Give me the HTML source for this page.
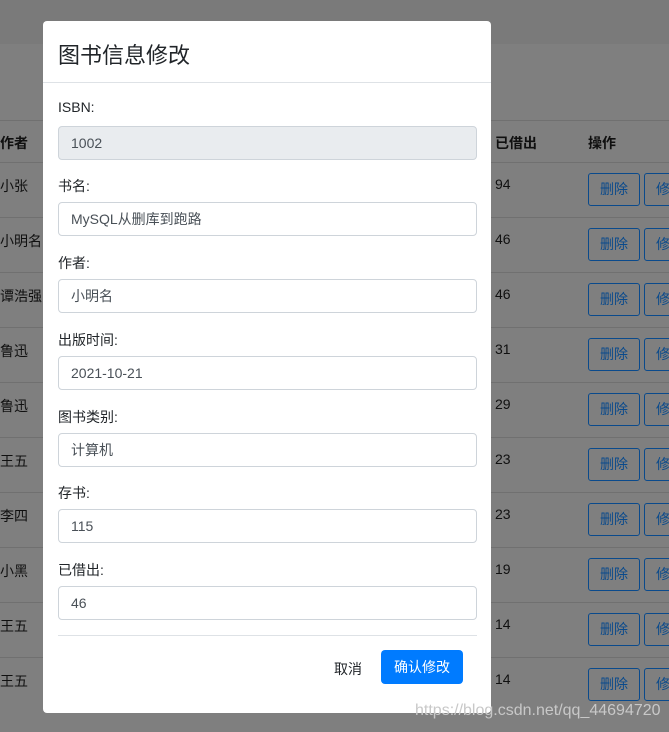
<!DOCTYPE html>
<html><head><meta charset="utf-8"><style>
*{box-sizing:border-box;margin:0;padding:0}
body{width:669px;height:732px;overflow:hidden;background:#7f7f7f;font-family:"Liberation Sans","Noto Sans CJK SC",sans-serif;font-size:14px;color:#111;position:relative}
.top{position:absolute;left:0;top:0;width:669px;height:44px;background:#7a7a7a}
.hl{position:absolute;left:0;width:669px;height:1px;background:#707070}
.t{position:absolute;font-size:14px;color:#101010}
.b{position:absolute;width:52px;height:33px;border:1px solid #0a4a8c;border-radius:3px;color:#0a4a8c;font-size:14px;line-height:31px;text-align:center}
.modal{position:absolute;left:43px;top:21px;width:448px;height:692px;background:#fff;border-radius:4px}
.title{position:absolute;left:15px;top:17px;font-size:22px;color:#212529}
.hd{position:absolute;left:0;top:61px;width:448px;height:1px;background:#dee2e6}
.lab{position:absolute;left:15px;font-size:14px;color:#212529}
.in{position:absolute;left:15px;width:419px;height:34px;border:1px solid #ced4da;border-radius:4px;padding-left:12px;line-height:32px;font-size:14px;color:#495057}
.ft{position:absolute;left:15px;top:614px;width:419px;height:1px;background:#dee2e6}
.cancel{position:absolute;left:291px;top:638px;font-size:14px;color:#212529}
.ok{position:absolute;left:338px;top:629px;width:82px;height:34px;background:#007bff;border-radius:4px;color:#fff;text-align:center;line-height:34px;font-size:14px}
.wm{position:absolute;left:415px;top:702px;font-size:16px;color:#c8c8c8}
</style></head><body>
<div class="top"></div>
<div class="hl" style="top:120px"></div>
<div class="hl" style="top:162px"></div>
<div class="hl" style="top:217px"></div>
<div class="hl" style="top:272px"></div>
<div class="hl" style="top:327px"></div>
<div class="hl" style="top:382px"></div>
<div class="hl" style="top:437px"></div>
<div class="hl" style="top:492px"></div>
<div class="hl" style="top:547px"></div>
<div class="hl" style="top:602px"></div>
<div class="hl" style="top:657px"></div>
<div class="t" style="left:0;top:133px;font-weight:bold">作者</div>
<div class="t" style="left:495px;top:133px;font-weight:bold">已借出</div>
<div class="t" style="left:588px;top:133px;font-weight:bold">操作</div>

<div class="t" style="left:0;top:176px">小张</div><div class="t" style="left:495px;top:176px">94</div>
<div class="t" style="left:0;top:231px">小明名</div><div class="t" style="left:495px;top:231px">46</div>
<div class="t" style="left:0;top:286px">谭浩强</div><div class="t" style="left:495px;top:286px">46</div>
<div class="t" style="left:0;top:341px">鲁迅</div><div class="t" style="left:495px;top:341px">31</div>
<div class="t" style="left:0;top:396px">鲁迅</div><div class="t" style="left:495px;top:396px">29</div>
<div class="t" style="left:0;top:451px">王五</div><div class="t" style="left:495px;top:451px">23</div>
<div class="t" style="left:0;top:506px">李四</div><div class="t" style="left:495px;top:506px">23</div>
<div class="t" style="left:0;top:561px">小黑</div><div class="t" style="left:495px;top:561px">19</div>
<div class="t" style="left:0;top:616px">王五</div><div class="t" style="left:495px;top:616px">14</div>
<div class="t" style="left:0;top:671px">王五</div><div class="t" style="left:495px;top:671px">14</div>

<div class="b" style="left:588px;top:173px">删除</div><div class="b" style="left:644px;top:173px">修改</div>
<div class="b" style="left:588px;top:228px">删除</div><div class="b" style="left:644px;top:228px">修改</div>
<div class="b" style="left:588px;top:283px">删除</div><div class="b" style="left:644px;top:283px">修改</div>
<div class="b" style="left:588px;top:338px">删除</div><div class="b" style="left:644px;top:338px">修改</div>
<div class="b" style="left:588px;top:393px">删除</div><div class="b" style="left:644px;top:393px">修改</div>
<div class="b" style="left:588px;top:448px">删除</div><div class="b" style="left:644px;top:448px">修改</div>
<div class="b" style="left:588px;top:503px">删除</div><div class="b" style="left:644px;top:503px">修改</div>
<div class="b" style="left:588px;top:558px">删除</div><div class="b" style="left:644px;top:558px">修改</div>
<div class="b" style="left:588px;top:613px">删除</div><div class="b" style="left:644px;top:613px">修改</div>
<div class="b" style="left:588px;top:668px">删除</div><div class="b" style="left:644px;top:668px">修改</div>

<div class="modal">
<div class="title">图书信息修改</div>
<div class="hd"></div>
<div class="lab" style="top:78px">ISBN:</div>
<div class="in" style="top:105px;background:#e9ecef">1002</div>
<div class="lab" style="top:155px">书名:</div>
<div class="in" style="top:181px">MySQL从删库到跑路</div>
<div class="lab" style="top:232px">作者:</div>
<div class="in" style="top:258px">小明名</div>
<div class="lab" style="top:309px">出版时间:</div>
<div class="in" style="top:335px">2021-10-21</div>
<div class="lab" style="top:386px">图书类别:</div>
<div class="in" style="top:412px">计算机</div>
<div class="lab" style="top:462px">存书:</div>
<div class="in" style="top:488px">115</div>
<div class="lab" style="top:539px">已借出:</div>
<div class="in" style="top:565px">46</div>
<div class="ft"></div>
<div class="cancel">取消</div>
<div class="ok">确认修改</div>
</div>
<div class="wm">https://blog.csdn.net/qq_44694720</div>
</body></html>
